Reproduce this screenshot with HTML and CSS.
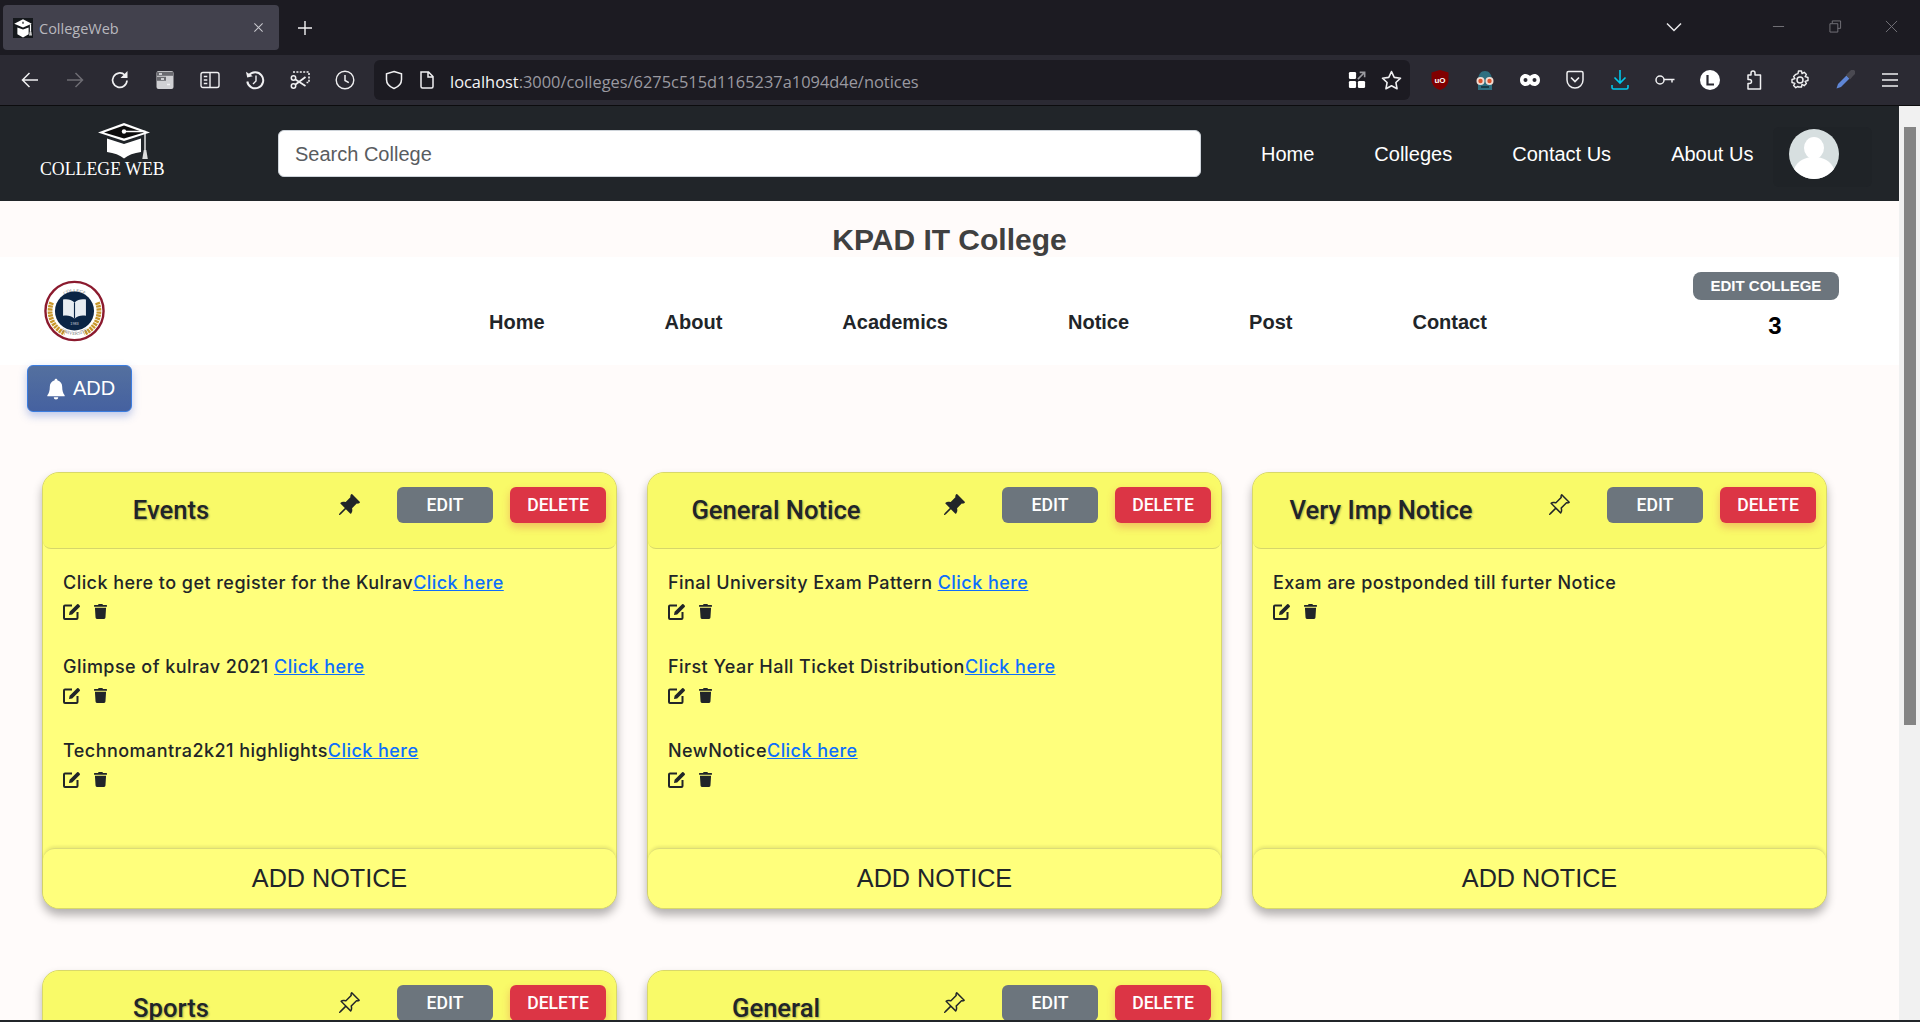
FILE: index.html
```html
<!DOCTYPE html>
<html lang="en">
<head>
    <meta charset="UTF-8">
    <meta name="viewport" content="width=device-width, initial-scale=1.0">
    <title>CollegeWeb</title>
    <link rel="stylesheet" href="styles.css">
</head>
<body>
    <svg class="sprite" width="0" height="0">
        <defs>
            <symbol id="pin-fill" viewBox="0 0 16 16"><path fill="currentColor" d="M9.828.722a.5.5 0 0 1 .354.146l4.95 4.95a.5.5 0 0 1 0 .707c-.48.48-1.072.588-1.503.588-.177 0-.335-.018-.46-.039l-3.134 3.134a5.927 5.927 0 0 1 .16 1.013c.046.702-.032 1.687-.72 2.375a.5.5 0 0 1-.707 0l-2.829-2.828-3.182 3.182c-.195.195-1.219.902-1.414.707-.195-.195.512-1.22.707-1.414l3.182-3.182-2.828-2.829a.5.5 0 0 1 0-.707c.688-.688 1.673-.767 2.375-.72a5.922 5.922 0 0 1 1.013.16l3.134-3.133a2.772 2.772 0 0 1-.04-.461c0-.43.108-1.022.589-1.503a.5.5 0 0 1 .353-.146z"/></symbol>
            <symbol id="pin-line" viewBox="0 0 16 16"><path fill="currentColor" d="M9.828.722a.5.5 0 0 1 .354.146l4.95 4.95a.5.5 0 0 1 0 .707c-.48.48-1.072.588-1.503.588-.177 0-.335-.018-.46-.039l-3.134 3.134a5.927 5.927 0 0 1 .16 1.013c.046.702-.032 1.687-.72 2.375a.5.5 0 0 1-.707 0l-2.829-2.828-3.182 3.182c-.195.195-1.219.902-1.414.707-.195-.195.512-1.22.707-1.414l3.182-3.182-2.828-2.829a.5.5 0 0 1 0-.707c.688-.688 1.673-.767 2.375-.72a5.922 5.922 0 0 1 1.013.16l3.134-3.133a2.772 2.772 0 0 1-.04-.461c0-.43.108-1.022.589-1.503a.5.5 0 0 1 .353-.146zm.122 2.112v-.002.002zm0-.002v.002a.5.5 0 0 1-.122.51L6.293 6.878a.5.5 0 0 1-.511.12H5.78l-.014-.004a4.507 4.507 0 0 0-.288-.076 4.922 4.922 0 0 0-.765-.116c-.422-.028-.836.008-1.175.15l5.51 5.509c.141-.34.177-.753.149-1.175a4.924 4.924 0 0 0-.192-1.054l-.004-.013v-.001a.5.5 0 0 1 .12-.512l3.536-3.535a.5.5 0 0 1 .532-.115l.096.022c.087.017.208.034.344.034.114 0 .23-.011.343-.04L9.927 2.028c-.029.113-.04.23-.04.343a1.779 1.779 0 0 0 .062.46z"/></symbol>
            <symbol id="edit" viewBox="0 0 18 17">
                <path d="M9 2.500H2a1 1 0 0 0-1 1V15a1 1 0 0 0 1 1h11.500a1 1 0 0 0 1-1V9" fill="none" stroke="currentColor" stroke-width="2"/>
                <path d="M6 12l.6-3.200 7.500-7.500a1 1 0 0 1 1.400 0l1.200 1.200a1 1 0 0 1 0 1.400L9.200 11.400z" fill="currentColor"/>
            </symbol>
            <symbol id="trash" viewBox="0 0 448 512"><path fill="currentColor" d="M432 32H312l-9.400-18.700A24 24 0 0 0 281.100 0H166.800a23.720 23.720 0 0 0-21.400 13.300L136 32H16A16 16 0 0 0 0 48v32a16 16 0 0 0 16 16h416a16 16 0 0 0 16-16V48a16 16 0 0 0-16-16zM53.200 467a48 48 0 0 0 47.900 45h245.800a48 48 0 0 0 47.900-45L416 128H32z"/></symbol>
        </defs>
    </svg>

    <div class="browser">
        <!-- tab strip -->
        <div class="tabstrip">
            <div class="tab">
                <svg class="favicon" viewBox="0 0 16 16"><rect width="16" height="16" fill="#15181c"/><path d="M8 1 15 4.500 8 7.500 1 4.500z" fill="#fff"/><path d="M8 3v1.500" stroke="#15181c"/><path d="M3.500 7.500 8 9.200 12.500 7.500v5.500L8 15.500 3.500 13z" fill="#fff"/><path d="M14 5v6" stroke="#fff"/><path d="M13.300 11h1.400l.5 3h-2.400z" fill="#ccc"/></svg>
                <span class="tab-title">CollegeWeb</span>
                <svg class="tab-close" viewBox="0 0 12 12"><path d="M1.500 1.500l9 9M10.500 1.500l-9 9" stroke="#c9c9cf" stroke-width="1.100"/></svg>
            </div>
            <svg class="new-tab" viewBox="0 0 16 16"><path d="M8 1v14M1 8h14" stroke="#f2f2f4" stroke-width="1.400"/></svg>
            <svg class="tab-list" viewBox="0 0 16 10"><path d="M1 1.500l7 7 7-7" fill="none" stroke="#e8e8ea" stroke-width="1.500"/></svg>
            <div class="win-buttons">
                <svg viewBox="0 0 14 14"><path d="M1 7h12" stroke="#77767c"/></svg>
                <svg viewBox="0 0 14 14"><path d="M3.500 3.500V1h9v8h-3M1 4h8.500v9H1z" fill="none" stroke="#77767c"/></svg>
                <svg viewBox="0 0 14 14"><path d="M1 1l12 12M13 1L1 13" stroke="#77767c"/></svg>
            </div>
        </div>

        <!-- toolbar -->
        <div class="toolbar">
            <svg class="tool" viewBox="0 0 20 20"><path d="M18 10H2.500M9.500 3l-7 7 7 7" fill="none" stroke="#f0f0f2" stroke-width="1.500"/></svg>
            <svg class="tool" viewBox="0 0 20 20"><path d="M2 10h15.500M10.500 3l7 7-7 7" fill="none" stroke="#6d6c73" stroke-width="1.500"/></svg>
            <svg class="tool" viewBox="0 0 20 20"><path d="M17 10.500a7.200 7.200 0 1 1-2.200-5.500" fill="none" stroke="#f0f0f2" stroke-width="1.700"/><path d="M17.500 1v7h-7z" fill="#f0f0f2"/></svg>
            <svg class="tool" viewBox="0 0 20 20"><rect x="1.500" y="1" width="17" height="18" rx="2" fill="#d0d0d4"/><path d="M2 1.800h16v4H2z" fill="#6a6a70"/><path d="M2 6.800h9v4H2z" fill="#6a6a70"/><path d="M4 4h3M6 9h3M12 14.500h3" stroke="#f0f0f2" stroke-width="1.300"/></svg>
            <svg class="tool" viewBox="0 0 20 20"><rect x="1" y="2.500" width="18" height="15" rx="2" fill="none" stroke="#f0f0f2" stroke-width="1.400"/><path d="M10 2.500v15" stroke="#f0f0f2" stroke-width="1.400"/><path d="M3.800 6.500h3.500M3.800 10h3.500M3.800 13.500h3.500" stroke="#f0f0f2" stroke-width="1.300"/></svg>
            <svg class="tool" viewBox="0 0 20 20"><path d="M3.800 5.500a8 8 0 1 1-1.500 6" fill="none" stroke="#f0f0f2" stroke-width="2"/><path d="M1 1.800l1.200 5.600 5.600-1.200z" fill="#f0f0f2"/><path d="M11 5.500V11L8 14" fill="none" stroke="#f0f0f2" stroke-width="1.400"/></svg>
            <svg class="tool" viewBox="0 0 20 20"><circle cx="3.500" cy="16" r="2.200" fill="none" stroke="#f0f0f2" stroke-width="1.500"/><circle cx="3.500" cy="8" r="2.200" fill="none" stroke="#f0f0f2" stroke-width="1.500"/><path d="M5.500 9.500l10 6.500M5.500 14.500l10-7.500" stroke="#f0f0f2" stroke-width="1.700"/><path d="M3 2h16v10.500h-2.500" fill="none" stroke="#f0f0f2" stroke-width="1.600" stroke-dasharray="2 1.400"/></svg>
            <svg class="tool" viewBox="0 0 20 20"><circle cx="10" cy="10" r="8.800" fill="none" stroke="#f0f0f2" stroke-width="1.400"/><path d="M10 5v5.500l3.800 2.200" fill="none" stroke="#f0f0f2" stroke-width="1.500"/></svg>

            <div class="urlbar">
                <svg class="url-icon" viewBox="0 0 20 20"><path d="M10 1.500l7.500 2.400v5.600c0 4.200-3.200 7.400-7.500 9-4.300-1.600-7.500-4.800-7.500-9V3.900z" fill="none" stroke="#f0f0f2" stroke-width="1.500"/></svg>
                <svg class="url-icon" viewBox="0 0 20 20"><path d="M4 2h7.500L16 6.500v10a1.500 1.500 0 0 1-1.500 1.500h-9A1.500 1.500 0 0 1 4 16.500zM11 2V7h5" fill="none" stroke="#f0f0f2" stroke-width="1.500"/></svg>
                <span class="url"><span class="url-host">localhost</span>:3000/colleges/6275c515d1165237a1094d4e/notices</span>
                <svg class="url-grid" viewBox="0 0 20 20"><rect x="1" y="1" width="8" height="8" rx="1.500" fill="#fff"/><rect x="1" y="11" width="8" height="8" rx="1.500" fill="#fff"/><rect x="11" y="11" width="8" height="8" rx="1.500" fill="#fff"/><path d="M11 9l7-7M13 1.500h5.500V7" fill="none" stroke="#9b9ba0" stroke-width="1.800"/></svg>
                <svg class="url-star" viewBox="0 0 20 20"><path d="M10 1.500l2.600 5.500 6 .8-4.400 4.100 1.100 6L10 15l-5.300 2.900 1.100-6L1.400 7.800l6-.8z" fill="none" stroke="#f0f0f2" stroke-width="1.500" stroke-linejoin="round"/></svg>
            </div>

            <div class="extensions">
                <svg viewBox="0 0 20 20"><path d="M10 0l8.500 2.500v7.500c0 4.800-3.700 8.400-8.500 10-4.800-1.600-8.500-5.200-8.500-10V2.500z" fill="#800000"/><text x="10" y="12.500" class="ub">uO</text></svg>
                <svg viewBox="0 0 20 20"><path d="M3 11C3 4 6 1 10 1s7 3 7 10v9H3z" fill="#2f6f80"/><circle cx="5.500" cy="11" r="4" fill="#f0dcd2"/><circle cx="14.500" cy="11" r="4" fill="#f0dcd2"/><circle cx="5.500" cy="11" r="2.200" fill="#d9532c"/><circle cx="14.500" cy="11" r="2.200" fill="#d9532c"/><path d="M6 17h8" stroke="#1a3c47" stroke-width="2"/></svg>
                <svg viewBox="0 0 20 20"><path d="M5.500 4c2 0 3.500 1 4.500 2 1-1 2.500-2 4.500-2C17.500 4 20 6.500 20 10s-2.500 6-5.500 6c-2 0-3.500-1-4.500-2-1 1-2.500 2-4.500 2C2.500 16 0 13.500 0 10s2.500-6 5.500-6z" fill="#fff"/><circle cx="5.500" cy="10" r="2" fill="#2b2a33"/><circle cx="14.500" cy="10" r="2" fill="#2b2a33"/></svg>
                <svg viewBox="0 0 20 20"><path d="M3.500 1.500h13A1.500 1.500 0 0 1 18 3V10a8 8 0 0 1-16 0V3a1.500 1.500 0 0 1 1.500-1.500z" fill="none" stroke="#f0f0f2" stroke-width="1.500"/><path d="M6 7.500l4 4 4-4" fill="none" stroke="#f0f0f2" stroke-width="1.700"/></svg>
                <svg viewBox="0 0 20 20"><path d="M10 0v13M4.500 7.500L10 13l5.500-5.500M2 15v2.500A1.500 1.500 0 0 0 3.500 19h13a1.500 1.500 0 0 0 1.500-1.500V15" fill="none" stroke="#00c8eb" stroke-width="1.600"/></svg>
                <svg viewBox="0 0 20 20"><circle cx="5" cy="10" r="4" fill="none" stroke="#f0f0f2" stroke-width="1.500"/><path d="M9 9.500h10.500M17 9.500v3" fill="none" stroke="#f0f0f2" stroke-width="1.500"/></svg>
                <svg viewBox="0 0 20 20"><circle cx="10" cy="10" r="10" fill="#fff"/><path d="M7.500 5v9.500H14" fill="none" stroke="#2b2a33" stroke-width="2.200"/></svg>
                <svg viewBox="0 0 20 20"><path d="M8 1a2 2 0 0 1 2 2v2h5.500v14H3v-5.500h1.500a2 2 0 0 0 0-4H3V5h3V3a2 2 0 0 1 2-2z" fill="none" stroke="#f0f0f2" stroke-width="1.500" stroke-linejoin="round"/></svg>
                <svg viewBox="0 0 20 20"><circle cx="10" cy="10" r="3" fill="none" stroke="#f0f0f2" stroke-width="1.500"/><path d="M8.500 1h3l.5 2.600 2.200-1.300 2.200 2.200-1.300 2.200 2.900.8v3l-2.900.8 1.300 2.200-2.200 2.200-2.200-1.300-.5 2.600h-3L8 16.400l-2.200 1.300-2.200-2.200 1.300-2.200L2 12.500v-3l2.900-.8-1.300-2.200 2.200-2.200L8 3.600z" fill="none" stroke="#f0f0f2" stroke-width="1.400" stroke-linejoin="round"/></svg>
                <svg viewBox="0 0 20 20"><path d="M11.500 5.500L3 14l-1.500 4.500L6 17l8.500-8.500z" fill="#5f86d6"/><path d="M11 5l3-3 1.500-1.500a2 2 0 0 1 4 4L18 6l-3 3.500z" fill="#4a4951"/></svg>
                <svg viewBox="0 0 20 20"><path d="M2 4h16M2 10h16M2 16h16" stroke="#f0f0f2" stroke-width="1.600"/></svg>
            </div>
        </div>

        <div class="viewport">
            <main class="page">
                <!-- site header -->
                <nav class="site-nav">
                    <div class="brand">
                        <svg class="brand-cap" viewBox="0 0 52 36">
                            <path d="M26 0 52 9.500 26 18 0 9.500z" fill="#fff"/>
                            <path d="M26 2.500 46 9.500 26 15.500 6 9.500z" fill="#0c0c0c"/>
                            <path d="M9 15.500 26 21 43 15.500V29C36 30 30 32 26 35.500 22 32 16 30 9 29z" fill="#fff"/>
                            <circle cx="26" cy="8.500" r="2.200" fill="#fff"/>
                            <path d="M26 8.500H47V28" fill="none" stroke="#fff" stroke-width="1.300"/>
                            <path d="M45.800 27h2.500l1.500 9h-5.500z" fill="#ddd"/>
                        </svg>
                        <span class="brand-name">COLLEGE WEB</span>
                    </div>
                    <input class="search" type="text" placeholder="Search College">
                    <ul class="site-links">
                        <li>Home</li>
                        <li>Colleges</li>
                        <li>Contact Us</li>
                        <li>About Us</li>
                    </ul>
                    <div class="avatar-box">
                        <svg class="avatar" viewBox="0 0 50 50">
                            <circle cx="25" cy="25" r="25" fill="#d7dfe0"/>
                            <ellipse cx="25" cy="19" rx="10" ry="11" fill="#fff"/>
                            <path d="M5 40c3-8 11-12 20-12s17 4 20 12c-5 6-12 10-20 10S10 46 5 40z" fill="#fff"/>
                        </svg>
                    </div>
                </nav>

                <h2 class="college-name">KPAD IT College</h2>

                <div class="college-nav">
                    <svg class="seal" viewBox="0 0 64 64">
                        <circle cx="32" cy="32" r="30.500" fill="#fff" stroke="#8b1a2e" stroke-width="2.500"/>
                        <path d="M8 23A25.500 25.500 0 0 0 22 55.500" fill="none" stroke="#c8962a" stroke-width="5" stroke-dasharray="2.400 .8"/>
                        <path d="M56 23A25.500 25.500 0 0 1 42 55.500" fill="none" stroke="#c8962a" stroke-width="5" stroke-dasharray="2.400 .8"/>
                        <path id="seal-top" d="M12 28A20.500 20.500 0 0 1 52 28" fill="none"/>
                        <path id="seal-bottom" d="M9 40A24 24 0 0 0 55 40" fill="none"/>
                        <text class="seal-text"><textPath href="#seal-top" startOffset="50%">COLLEGE</textPath></text>
                        <text class="seal-text"><textPath href="#seal-bottom" startOffset="50%">UNIVERSITY</textPath></text>
                        <circle cx="32" cy="32" r="20.500" fill="#0b2545"/>
                        <path d="M20 20c4.500-1 8.500 0 12 3 3.500-3 7.500-4 12-3v17c-4.500-1-8.500 0-12 3-3.500-3-7.500-4-12-3z" fill="#e8edf2"/>
                        <path d="M32 23v17" stroke="#0b2545" stroke-width="1.200"/>
                        <text class="seal-year" x="32" y="47">1983</text>
                    </svg>
                    <ul class="college-links">
                        <li>Home</li>
                        <li>About</li>
                        <li>Academics</li>
                        <li>Notice</li>
                        <li>Post</li>
                        <li>Contact</li>
                    </ul>
                    <div class="college-side">
                        <button class="btn-edit-college">EDIT COLLEGE</button>
                        <span class="count">3</span>
                    </div>
                </div>

                <button class="btn-add">
                    <svg class="bell" viewBox="0 0 16 18"><path fill="currentColor" d="M8 0a1.200 1.200 0 0 1 1.200 1.300C12 2 13.500 4.400 13.500 7c0 3.500.8 6 2.200 7.500V15.500H.3v-1C1.700 13 2.500 10.500 2.500 7c0-2.600 1.500-5 4.300-5.700A1.200 1.200 0 0 1 8 0zM6 16.300h4a2 2 0 0 1-4 0z"/></svg>
                    ADD
                </button>

                <section class="cards">
                    <article class="card">
                        <header class="card-head">
                            <h3 class="card-title">Events</h3>
                            <svg class="pin"><use href="#pin-fill"/></svg>
                            <button class="btn btn-grey">EDIT</button>
                            <button class="btn btn-red">DELETE</button>
                        </header>
                        <div class="card-body">
                            <div class="notice">
                                <p>Click here to get register for the Kulrav<a href="#">Click here</a></p>
                                <div class="notice-tools"><svg class="ico-edit"><use href="#edit"/></svg><svg class="ico-trash"><use href="#trash"/></svg></div>
                            </div>
                            <div class="notice">
                                <p>Glimpse of kulrav 2021 <a href="#">Click here</a></p>
                                <div class="notice-tools"><svg class="ico-edit"><use href="#edit"/></svg><svg class="ico-trash"><use href="#trash"/></svg></div>
                            </div>
                            <div class="notice">
                                <p>Technomantra2k21 highlights<a href="#">Click here</a></p>
                                <div class="notice-tools"><svg class="ico-edit"><use href="#edit"/></svg><svg class="ico-trash"><use href="#trash"/></svg></div>
                            </div>
                        </div>
                        <footer class="card-foot">ADD NOTICE</footer>
                    </article>

                    <article class="card">
                        <header class="card-head">
                            <h3 class="card-title">General Notice</h3>
                            <svg class="pin"><use href="#pin-fill"/></svg>
                            <button class="btn btn-grey">EDIT</button>
                            <button class="btn btn-red">DELETE</button>
                        </header>
                        <div class="card-body">
                            <div class="notice">
                                <p>Final University Exam Pattern <a href="#">Click here</a></p>
                                <div class="notice-tools"><svg class="ico-edit"><use href="#edit"/></svg><svg class="ico-trash"><use href="#trash"/></svg></div>
                            </div>
                            <div class="notice">
                                <p>First Year Hall Ticket Distribution<a href="#">Click here</a></p>
                                <div class="notice-tools"><svg class="ico-edit"><use href="#edit"/></svg><svg class="ico-trash"><use href="#trash"/></svg></div>
                            </div>
                            <div class="notice">
                                <p>NewNotice<a href="#">Click here</a></p>
                                <div class="notice-tools"><svg class="ico-edit"><use href="#edit"/></svg><svg class="ico-trash"><use href="#trash"/></svg></div>
                            </div>
                        </div>
                        <footer class="card-foot">ADD NOTICE</footer>
                    </article>

                    <article class="card">
                        <header class="card-head">
                            <h3 class="card-title">Very Imp Notice</h3>
                            <svg class="pin"><use href="#pin-line"/></svg>
                            <button class="btn btn-grey">EDIT</button>
                            <button class="btn btn-red">DELETE</button>
                        </header>
                        <div class="card-body">
                            <div class="notice">
                                <p>Exam are postponded till furter Notice</p>
                                <div class="notice-tools"><svg class="ico-edit"><use href="#edit"/></svg><svg class="ico-trash"><use href="#trash"/></svg></div>
                            </div>
                        </div>
                        <footer class="card-foot">ADD NOTICE</footer>
                    </article>

                    <article class="card">
                        <header class="card-head">
                            <h3 class="card-title">Sports</h3>
                            <svg class="pin"><use href="#pin-line"/></svg>
                            <button class="btn btn-grey">EDIT</button>
                            <button class="btn btn-red">DELETE</button>
                        </header>
                    </article>

                    <article class="card">
                        <header class="card-head">
                            <h3 class="card-title">General</h3>
                            <svg class="pin"><use href="#pin-line"/></svg>
                            <button class="btn btn-grey">EDIT</button>
                            <button class="btn btn-red">DELETE</button>
                        </header>
                    </article>
                </section>
            </main>

            <div class="scrollbar"><div class="scroll-thumb"></div></div>
        </div>
    </div>
</body>
</html>
```

FILE: styles.css
```css
* {
    box-sizing: border-box;
}
html, body {
    margin: 0;
    padding: 0;
    height: 100%;
    overflow: hidden;
}
body {
    font-family: "Liberation Sans", Arial, sans-serif;
    background: #212529;
}
ul {
    list-style: none;
    margin: 0;
    padding: 0;
}
.sprite {
    position: absolute;
}
.browser {
    height: 1020px;
    display: flex;
    flex-direction: column;
}

/* tab strip */
.tabstrip {
    height: 55px;
    background: #1c1b22;
    display: flex;
    align-items: flex-start;
    padding: 5px 0 0 3px;
    flex-shrink: 0;
}
.tab {
    width: 276px;
    height: 45px;
    background: #42414d;
    border-radius: 4px;
    display: flex;
    align-items: center;
    padding: 0 10px;
}
.favicon {
    width: 20px;
    height: 20px;
}
.tab-title {
    margin: 2px 0 0 6px;
    font-family: "Open Sans", sans-serif;
    font-size: 14.5px;
    color: #b9b8be;
    flex: 1;
}
.tab-close {
    width: 11px;
    height: 11px;
    margin-right: 5px;
}
.new-tab {
    width: 16px;
    height: 16px;
    margin: 15px 0 0 18px;
}
.tab-list {
    width: 16px;
    height: 10px;
    margin: 17px 0 0 1353px;
}
.win-buttons {
    display: flex;
    gap: 43.5px;
    margin: 15px 0 0 90px;
}
.win-buttons svg {
    width: 13px;
    height: 13px;
}

/* toolbar */
.toolbar {
    height: 51px;
    background: #2b2a33;
    border-bottom: 1px solid #0c0c0e;
    display: flex;
    align-items: center;
    padding-left: 20px;
    flex-shrink: 0;
}
.tool {
    width: 20px;
    height: 20px;
    margin-right: 25px;
    flex-shrink: 0;
}
.urlbar {
    width: 1036px;
    height: 40px;
    margin-left: -6px;
    background: #1c1b22;
    border-radius: 6px;
    display: flex;
    align-items: center;
    padding: 0 8px 0 10px;
}
.url-icon {
    width: 20px;
    height: 20px;
    margin-right: 13px;
    flex-shrink: 0;
}
.url {
    flex: 1;
    padding-top: 2px;
    font-family: "Open Sans", sans-serif;
    font-size: 16.4px;
    color: #9a99a0;
    white-space: nowrap;
}
.url-host {
    color: #f4f4f6;
}
.url-grid {
    width: 18px;
    height: 18px;
    margin-right: 15px;
}
.url-star {
    width: 21px;
    height: 21px;
}
.extensions {
    display: flex;
    align-items: center;
    gap: 25px;
    margin-left: 20px;
}
.extensions svg {
    width: 20px;
    height: 20px;
}
.ub {
    font-family: "Liberation Sans", sans-serif;
    font-size: 8px;
    font-weight: bold;
    fill: #fff;
    text-anchor: middle;
}

/* page */
.viewport {
    flex: 1;
    min-height: 0;
    display: flex;
}
.page {
    flex: 1;
    min-width: 0;
    background: #fffbfa;
    overflow: hidden;
}
.scrollbar {
    width: 21px;
    background: #f1f1f1;
    padding: 21px 4px 0 5px;
}
.scroll-thumb {
    height: 598px;
    background: #858585;
}

/* site header */
.site-nav {
    height: 95px;
    background: #212529;
    display: flex;
    align-items: center;
}
.brand {
    width: 204px;
    padding: 0 0 4px 40px;
    display: flex;
    flex-direction: column;
    align-items: flex-start;
    flex-shrink: 0;
}
.brand-cap {
    width: 52px;
    height: 36px;
    margin-left: 58px;
}
.brand-name {
    font-family: "Liberation Serif", serif;
    font-size: 17.8px;
    line-height: 21px;
    color: #fff;
    white-space: nowrap;
}
.search {
    width: 923px;
    height: 47px;
    margin-left: 74px;
    padding: 2px 16px 0;
    border: 1px solid #ced4da;
    border-radius: 6px;
    font-family: "Liberation Sans", sans-serif;
    font-size: 20px;
    background: #fff;
}
.search::placeholder {
    color: #595c5f;
}
.site-links {
    display: flex;
    gap: 60px;
    margin-left: 60px;
    padding-top: 2px;
    color: #fff;
    font-size: 20px;
}
.avatar-box {
    align-self: flex-start;
    margin: 21px 0 0 20px;
    width: 99px;
    height: 60px;
    padding: 2px 16px;
    border-radius: 6px;
    background: #1f2327;
}
.avatar {
    width: 50px;
    height: 50px;
    display: block;
}

.college-name {
    margin: 0;
    height: 56px;
    padding-top: 21px;
    text-align: center;
    font-size: 30px;
    line-height: 35px;
    font-weight: bold;
    color: #404040;
}

.college-nav {
    height: 108px;
    background: #fff;
    display: flex;
    align-items: center;
}
.seal {
    width: 61px;
    height: 62px;
    margin-left: 44px;
    flex-shrink: 0;
}
.seal-text {
    font-family: "Liberation Serif", serif;
    font-size: 5px;
    fill: #777;
    text-anchor: middle;
}
.seal-year {
    font-family: "Liberation Sans", sans-serif;
    font-size: 4px;
    fill: #c8d0d8;
    text-anchor: middle;
}
.college-links {
    display: flex;
    gap: 120px;
    margin: 22px 0 0 384px;
    font-size: 20px;
    font-weight: bold;
    color: #212529;
}
.college-side {
    margin: -11px 0 0 206px;
    width: 146px;
    display: flex;
    flex-direction: column;
    align-items: center;
    gap: 12px;
}
.btn-edit-college {
    width: 146px;
    height: 28px;
    background: #6c757d;
    border: 0;
    border-radius: 8px;
    color: #fff;
    font-family: "Liberation Sans", sans-serif;
    font-weight: bold;
    font-size: 15px;
}
.count {
    margin-left: 18px;
    font-size: 24px;
    font-weight: bold;
    color: #000;
}

.btn-add {
    display: flex;
    align-items: center;
    gap: 8px;
    width: 105px;
    height: 47px;
    margin-left: 27px;
    padding: 0 0 0 19px;
    border: 1px solid #3b7de0;
    border-radius: 6px;
    background: linear-gradient(#54709f, #4561a0);
    color: #fff;
    font-family: "Liberation Sans", sans-serif;
    font-size: 20px;
    box-shadow: 0 4px 8px rgba(60, 100, 200, 0.35);
}
.bell {
    width: 18px;
    height: 22px;
}

/* notice cards */
.cards {
    display: grid;
    grid-template-columns: repeat(3, 575px);
    column-gap: 30px;
    row-gap: 61px;
    padding: 60px 0 0 42px;
}
.card {
    height: 437px;
    background: #ffff7c;
    border: 1px solid #d8d86a;
    border-radius: 17px;
    box-shadow: 0 6px 10px rgba(0, 0, 0, 0.3);
    display: flex;
    flex-direction: column;
}
.card-head {
    height: 76px;
    flex-shrink: 0;
    background: #f9fa68;
    border-bottom: 1px solid #d6d66a;
    border-radius: 16px 16px 8px 8px;
    display: flex;
    align-items: flex-start;
}
.card-title {
    width: 256px;
    flex-shrink: 0;
    margin: 20px 0 0;
    font-family: "Roboto", sans-serif;
    font-weight: 500;
    font-size: 25.6px;
    line-height: 34px;
    text-align: center;
    color: #212529;
    text-shadow: 1px 1px 2px rgba(0, 0, 0, 0.3);
}
.pin {
    width: 24px;
    height: 24px;
    margin: 20px 0 0 38px;
    flex-shrink: 0;
    color: #212529;
}
.btn {
    width: 96px;
    height: 36px;
    margin-top: 14px;
    padding: 0;
    border: 0;
    border-radius: 6px;
    color: #fff;
    font-family: "Roboto", sans-serif;
    font-weight: 500;
    font-size: 17.6px;
    flex-shrink: 0;
}
.btn-grey {
    margin-left: 36px;
    background: #6c757d;
}
.btn-red {
    margin-left: 17px;
    background: #dc3545;
    box-shadow: 0 4px 8px rgba(220, 53, 69, 0.3);
}
.card-body {
    flex: 1;
    padding: 20px 20px 0;
    color: #212529;
}
.notice {
    height: 84px;
}
.notice p {
    margin: 0;
    font-family: "Inter", sans-serif;
    font-size: 18px;
    font-weight: 500;
    letter-spacing: 0.45px;
    line-height: 28px;
}
.notice a {
    color: #0d6efd;
}
.notice-tools {
    display: flex;
    align-items: center;
    gap: 13px;
    margin-top: 6px;
    color: #212529;
}
.ico-edit {
    width: 18px;
    height: 17px;
}
.ico-trash {
    width: 13px;
    height: 15px;
}
.card-foot {
    height: 60px;
    flex-shrink: 0;
    background: #ffff7c;
    border-top: 1px solid #dcdc78;
    border-radius: 12px 12px 16px 16px;
    box-shadow: 0 -2px 3px rgba(0, 0, 0, 0.08);
    text-align: center;
    font-size: 25.2px;
    line-height: 58px;
    color: #212529;
}
```
